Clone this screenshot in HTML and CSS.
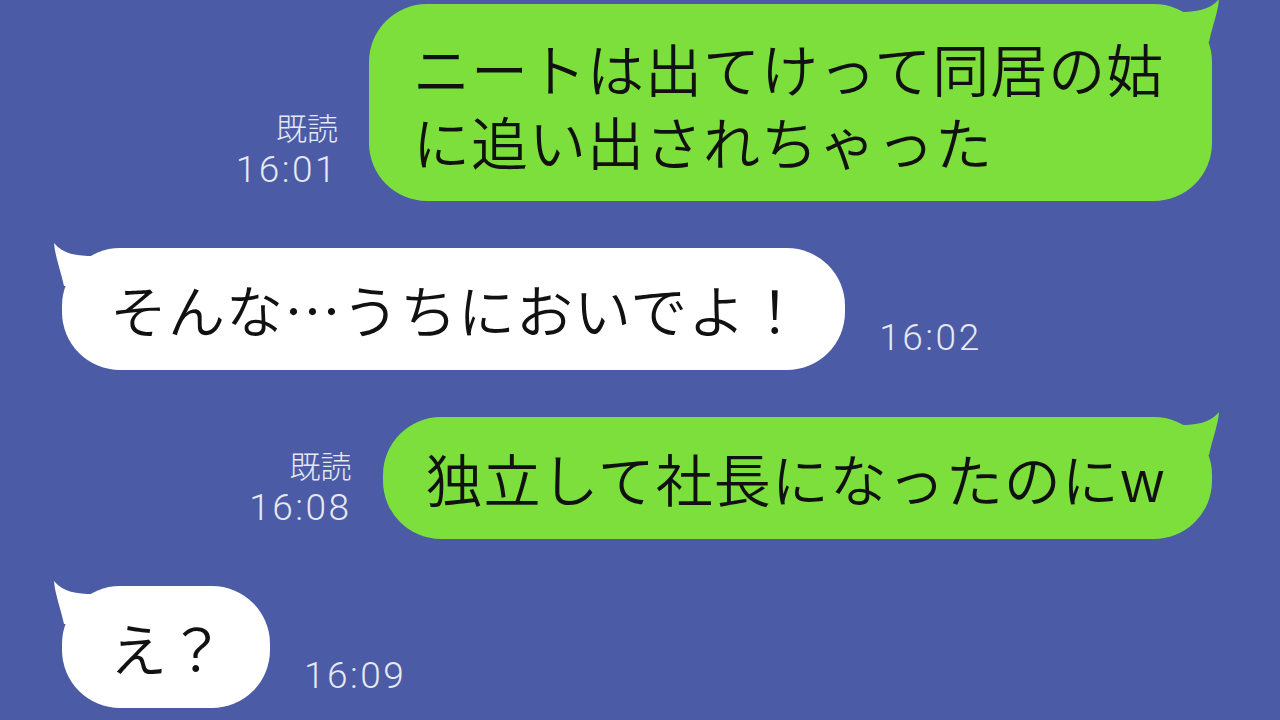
FILE: index.html
```html
<!DOCTYPE html>
<html lang="ja">
<head>
    <meta charset="UTF-8">
    <meta name="viewport" content="width=device-width, initial-scale=1.0">
    <title>トーク</title>

    <link rel="stylesheet" href="styles.css">
</head>
<body>

    <main class="chat">

        <div class="row row--me row--first">
            <div class="meta">
                <span class="meta__read">既読</span>
                <span class="meta__time">16:01</span>
            </div>
            <div class="bubble bubble--me bubble--wide">
                ニートは出てけって同居の姑<br>に追い出されちゃった
                <svg class="tail tail--me" viewBox="0 0 48 48" aria-hidden="true">
                    <path d="M8 14 C24 14 38 12 47 1 C46 14 41 26 37 44 L8 44 Z" />
                </svg>
            </div>
        </div>

        <div class="row row--them">
            <div class="bubble bubble--them">
                そんな…うちにおいでよ！
                <svg class="tail tail--them" viewBox="0 0 48 48" aria-hidden="true">
                    <path d="M8 14 C24 14 38 12 47 1 C46 14 41 26 37 44 L8 44 Z" />
                </svg>
            </div>
            <div class="meta">
                <span class="meta__time">16:02</span>
            </div>
        </div>

        <div class="row row--me">
            <div class="meta">
                <span class="meta__read">既読</span>
                <span class="meta__time">16:08</span>
            </div>
            <div class="bubble bubble--me">
                独立して社長になったのにw
                <svg class="tail tail--me" viewBox="0 0 48 48" aria-hidden="true">
                    <path d="M8 14 C24 14 38 12 47 1 C46 14 41 26 37 44 L8 44 Z" />
                </svg>
            </div>
        </div>

        <div class="row row--them">
            <div class="bubble bubble--them bubble--short">
                え？
                <svg class="tail tail--them" viewBox="0 0 48 48" aria-hidden="true">
                    <path d="M8 14 C24 14 38 12 47 1 C46 14 41 26 37 44 L8 44 Z" />
                </svg>
            </div>
            <div class="meta">
                <span class="meta__time">16:09</span>
            </div>
        </div>

    </main>

</body>
</html>
```

FILE: styles.css
```css
:root {
    --clr-bg: #4b5ba5;
    --clr-me: #7ddf3c;
    --clr-them: #ffffff;
    --clr-meta: #e6e9f3;
    --clr-text: #111111;
}
* {
    margin: 0;
    box-sizing: border-box;
}
html,
body {
    height: 100%;
}
body {
    background-color: var(--clr-bg);
    font-family: "Noto Sans CJK JP", "Noto Sans", sans-serif;
    overflow: hidden;
}
.chat {
    display: flex;
    flex-direction: column;
    gap: 47px;
    padding-top: 4px;
}

/* rows */
.row {
    display: flex;
    align-items: flex-end;
}
.row--me {
    justify-content: flex-end;
    gap: 31px;
    padding-right: 68px;
}
.row--them {
    justify-content: flex-start;
    gap: 34px;
    padding-left: 62px;
}

/* bubbles */
.bubble {
    position: relative;
    font-size: 57px;
    font-weight: 350;
    line-height: 73px;
    letter-spacing: 1px;
    color: var(--clr-text);
    padding: 24px 46px 25px 43px;
    border-radius: 58px;
    white-space: nowrap;
}
.bubble--me {
    background: var(--clr-me);
    fill: var(--clr-me);
}
.bubble--wide {
    padding-top: 27px;
    padding-bottom: 24px;
    width: 843px;
    padding-left: 44px;
}
.bubble--them {
    background: var(--clr-them);
    fill: var(--clr-them);
    padding-left: 48px;
    padding-right: 41px;
}
.bubble--short {
    padding-right: 44px;
}
.tail {
    position: absolute;
    top: -6px;
    width: 48px;
    height: 48px;
}
.tail--me {
    right: -8px;
}
.tail--them {
    left: -9px;
    transform: scaleX(-1);
}

/* read / time */
.meta {
    display: flex;
    flex-direction: column;
    align-items: flex-end;
    padding-bottom: 9px;
    color: var(--clr-meta);
    font-weight: 300;
}
.meta__read {
    font-size: 31px;
    line-height: 42px;
}
.meta__time {
    font-family: Roboto, "Noto Sans", sans-serif;
    font-size: 37px;
    line-height: 44px;
    letter-spacing: 2.5px;
}
.row--them .meta {
    padding-bottom: 10px;
}
```
